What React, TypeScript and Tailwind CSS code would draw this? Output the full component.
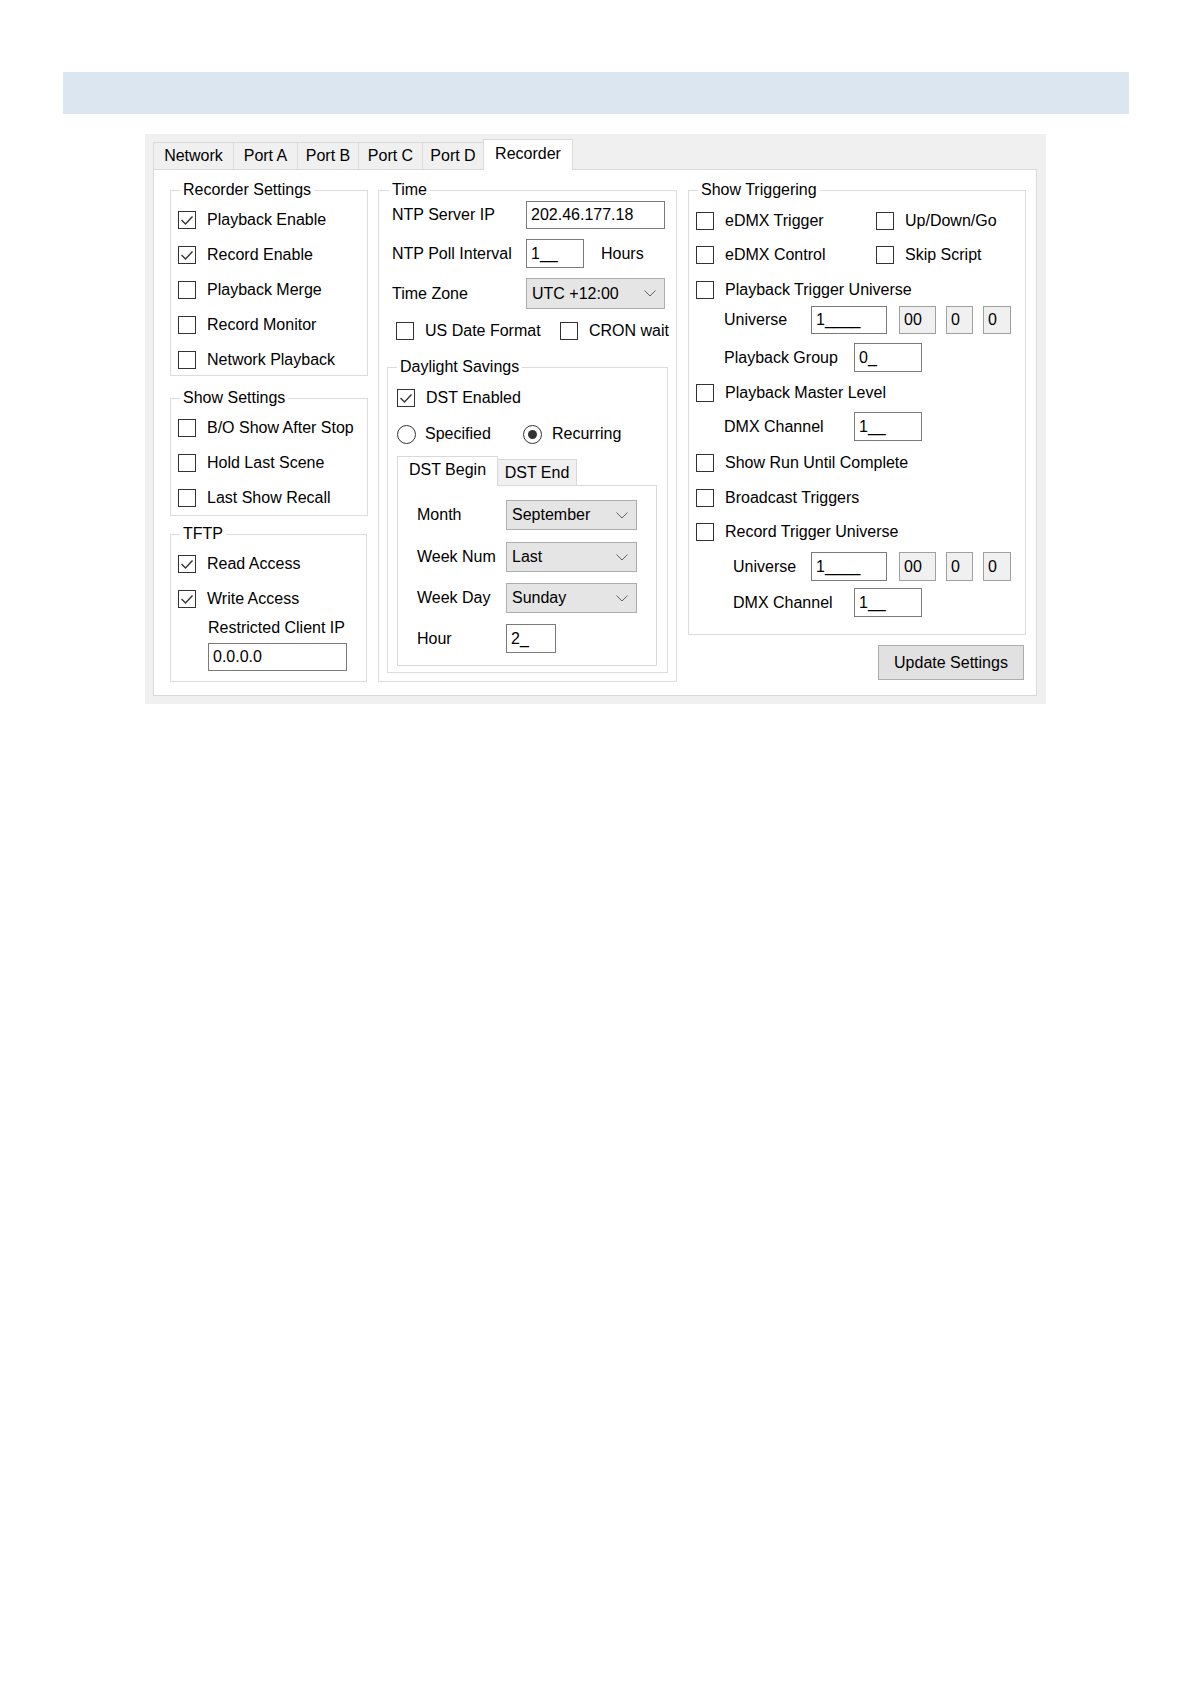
import React from "react";

function Check({ checked = false }: { checked?: boolean }) {
  return (
    <span className="w-[18px] h-[18px] shrink-0 border border-[#333333] bg-white flex items-center justify-center">
      {checked && (
        <svg width="16" height="16" viewBox="0 0 16 16">
          <polyline points="2.5,8 6.5,12 13.5,4.5" fill="none" stroke="#333333" strokeWidth="1.4" />
        </svg>
      )}
    </span>
  );
}

function Radio({ checked = false }: { checked?: boolean }) {
  return (
    <span className="w-[19px] h-[19px] shrink-0 rounded-full border border-[#333333] bg-white flex items-center justify-center">
      {checked && <span className="w-[9px] h-[9px] rounded-full bg-[#333333]" />}
    </span>
  );
}

function CheckRow({ label, checked, className = "" }: { label: string; checked?: boolean; className?: string }) {
  return (
    <div className={`flex items-center gap-[11px] h-[20px] ${className}`}>
      <Check checked={checked} />
      <span>{label}</span>
    </div>
  );
}

function Field({ value, className = "" }: { value: string; className?: string }) {
  return (
    <div className={`shrink-0 flex items-center border border-[#7a7a7a] bg-white pl-[4px] ${className}`}>
      {value}
    </div>
  );
}

function ReadOnly({ value, className = "" }: { value: string; className?: string }) {
  return (
    <div className={`shrink-0 flex items-center border border-[#a0a0a0] bg-[#f0f0f0] pl-[4px] ${className}`}>
      {value}
    </div>
  );
}

function Select({ value, className = "" }: { value: string; className?: string }) {
  return (
    <div className={`shrink-0 flex items-center justify-between border border-[#adadad] bg-[#e5e5e5] pl-[5px] pr-[8px] ${className}`}>
      <span>{value}</span>
      <svg width="12" height="7" viewBox="0 0 12 7">
        <polyline points="0.5,0.5 6,6 11.5,0.5" fill="none" stroke="#606060" strokeWidth="1" />
      </svg>
    </div>
  );
}

function Legend({ children, className = "ml-[2px]" }: { children: React.ReactNode; className?: string }) {
  return <legend className={`px-[3px] leading-[20px] ${className}`}>{children}</legend>;
}

export default function App() {
  const tabs = [
    { label: "Network", w: "w-[81px]" },
    { label: "Port A", w: "w-[65px]" },
    { label: "Port B", w: "w-[62px]" },
    { label: "Port C", w: "w-[65px]" },
    { label: "Port D", w: "w-[62px]" },
  ];

  return (
    <div className="min-h-screen bg-white pt-[72px] text-[16px] leading-[20px] text-black font-['Liberation_Sans',Arial,sans-serif]">
      <div className="ml-[63px] w-[1066px] h-[42px] bg-[#dce6f1]" />

      <div className="ml-[145px] mt-[20px] w-[901px] h-[570px] bg-[#f0f0f0] pt-[5px] pl-[8px]">
        {/* tab strip */}
        <div className="flex items-end h-[30px]">
          {tabs.map((t) => (
            <div
              key={t.label}
              className={`${t.w} h-[27px] -mr-px border border-b-0 border-[#d9d9d9] bg-[#f0f0f0] flex items-center justify-center`}
            >
              {t.label}
            </div>
          ))}
          <div className="relative z-10 w-[90px] h-[31px] -mb-px border border-b-0 border-[#d9d9d9] bg-white flex items-start justify-center pt-[4px]">
            Recorder
          </div>
        </div>

        {/* tab page */}
        <div className="w-[884px] h-[527px] border border-[#d9d9d9] bg-white pt-[10px] pl-[16px] flex gap-[10px]">
          {/* column 1 */}
          <div className="w-[198px] flex flex-col">
            <fieldset className="h-[196px] border border-[#dcdcdc] pl-[7px] pt-[10px] flex flex-col gap-[15px]">
              <Legend>Recorder Settings</Legend>
              <CheckRow label="Playback Enable" checked />
              <CheckRow label="Record Enable" checked />
              <CheckRow label="Playback Merge" />
              <CheckRow label="Record Monitor" />
              <CheckRow label="Network Playback" />
            </fieldset>
            <fieldset className="mt-[12px] h-[128px] border border-[#dcdcdc] pl-[7px] pt-[10px] flex flex-col gap-[15px]">
              <Legend>Show Settings</Legend>
              <CheckRow label="B/O Show After Stop" />
              <CheckRow label="Hold Last Scene" />
              <CheckRow label="Last Show Recall" />
            </fieldset>
            <fieldset className="mt-[8px] h-[158px] w-[197px] border border-[#dcdcdc] pl-[7px] pt-[10px] flex flex-col">
              <Legend>TFTP</Legend>
              <CheckRow label="Read Access" checked />
              <CheckRow label="Write Access" checked className="mt-[15px]" />
              <div className="mt-[9px] h-[20px] pl-[30px]">Restricted Client IP</div>
              <Field value="0.0.0.0" className="ml-[30px] mt-[5px] w-[139px] h-[28px]" />
            </fieldset>
          </div>

          {/* column 2 */}
          <fieldset className="w-[299px] h-[502px] border border-[#dcdcdc] pl-[8px] flex flex-col">
            <Legend>Time</Legend>
            <div className="mt-[1px] h-[28px] pl-[5px] flex items-center">
              <span className="w-[134px]">NTP Server IP</span>
              <Field value="202.46.177.18" className="w-[139px] h-[28px]" />
            </div>
            <div className="mt-[10px] h-[29px] pl-[5px] flex items-center">
              <span className="w-[134px]">NTP Poll Interval</span>
              <Field value="1__" className="w-[58px] h-[29px]" />
              <span className="ml-[17px]">Hours</span>
            </div>
            <div className="mt-[10px] h-[31px] pl-[5px] flex items-center">
              <span className="w-[134px]">Time Zone</span>
              <Select value="UTC +12:00" className="w-[139px] h-[31px]" />
            </div>
            <div className="mt-[13px] h-[18px] pl-[9px] flex items-center">
              <CheckRow label="US Date Format" className="w-[164px]" />
              <CheckRow label="CRON wait" />
            </div>

            <fieldset className="mt-[17px] w-[281px] h-[316px] border border-[#dcdcdc] pl-[9px] flex flex-col">
              <Legend className="ml-0">Daylight Savings</Legend>
              <CheckRow label="DST Enabled" checked className="mt-[11px]" />
              <div className="mt-[16px] h-[20px] flex items-center">
                <div className="w-[126px] flex items-center gap-[9px]">
                  <Radio />
                  <span>Specified</span>
                </div>
                <div className="flex items-center gap-[10px]">
                  <Radio checked />
                  <span>Recurring</span>
                </div>
              </div>

              {/* DST tab control */}
              <div className="mt-[12px] flex items-end h-[29px]">
                <div className="relative z-10 w-[101px] h-[30px] -mb-px border border-b-0 border-[#d9d9d9] bg-white flex items-start justify-center pt-[3px]">
                  DST Begin
                </div>
                <div className="w-[79px] h-[26px] border border-b-0 border-l-0 border-[#d9d9d9] bg-[#f0f0f0] flex items-center justify-center">
                  DST End
                </div>
              </div>
              <div className="w-[260px] h-[181px] border border-[#d9d9d9] bg-white pt-[14px] pl-[19px] flex flex-col">
                <div className="h-[30px] flex items-center">
                  <span className="w-[89px]">Month</span>
                  <Select value="September" className="w-[131px] h-[30px]" />
                </div>
                <div className="mt-[12px] h-[30px] flex items-center">
                  <span className="w-[89px]">Week Num</span>
                  <Select value="Last" className="w-[131px] h-[30px]" />
                </div>
                <div className="mt-[11px] h-[30px] flex items-center">
                  <span className="w-[89px]">Week Day</span>
                  <Select value="Sunday" className="w-[131px] h-[30px]" />
                </div>
                <div className="mt-[11px] h-[29px] flex items-center">
                  <span className="w-[89px]">Hour</span>
                  <Field value="2_" className="w-[50px] h-[29px]" />
                </div>
              </div>
            </fieldset>
          </fieldset>

          {/* column 3 */}
          <div className="w-[338px] ml-[1px] flex flex-col">
            <fieldset className="h-[455px] border border-[#dcdcdc] pl-[7px] flex flex-col">
              <Legend>Show Triggering</Legend>
              <div className="mt-[11px] h-[20px] flex items-center">
                <CheckRow label="eDMX Trigger" className="w-[180px] gap-[10px]" />
                <CheckRow label="Up/Down/Go" className="gap-[11px]" />
              </div>
              <div className="mt-[14px] h-[20px] flex items-center">
                <CheckRow label="eDMX Control" className="w-[180px] gap-[10px]" />
                <CheckRow label="Skip Script" className="gap-[11px]" />
              </div>
              <CheckRow label="Playback Trigger Universe" className="mt-[15px] gap-[10px]" />
              <div className="mt-[6px] h-[28px] pl-[28px] flex items-center">
                <span className="w-[87px]">Universe</span>
                <Field value="1____" className="w-[76px] h-[28px]" />
                <ReadOnly value="00" className="ml-[12px] w-[37px] h-[28px]" />
                <ReadOnly value="0" className="ml-[10px] w-[27px] h-[28px]" />
                <ReadOnly value="0" className="ml-[10px] w-[28px] h-[28px]" />
              </div>
              <div className="mt-[9px] h-[29px] pl-[28px] flex items-center">
                <span className="w-[130px]">Playback Group</span>
                <Field value="0_" className="w-[68px] h-[29px]" />
              </div>
              <CheckRow label="Playback Master Level" className="mt-[11px] gap-[10px]" />
              <div className="mt-[9px] h-[29px] pl-[28px] flex items-center">
                <span className="w-[130px]">DMX Channel</span>
                <Field value="1__" className="w-[68px] h-[29px]" />
              </div>
              <CheckRow label="Show Run Until Complete" className="mt-[12px] gap-[10px]" />
              <CheckRow label="Broadcast Triggers" className="mt-[15px] gap-[10px]" />
              <CheckRow label="Record Trigger Universe" className="mt-[14px] gap-[10px]" />
              <div className="mt-[10px] h-[29px] pl-[37px] flex items-center">
                <span className="w-[78px]">Universe</span>
                <Field value="1____" className="w-[76px] h-[29px]" />
                <ReadOnly value="00" className="ml-[12px] w-[37px] h-[29px]" />
                <ReadOnly value="0" className="ml-[10px] w-[27px] h-[29px]" />
                <ReadOnly value="0" className="ml-[10px] w-[28px] h-[29px]" />
              </div>
              <div className="mt-[7px] h-[29px] pl-[37px] flex items-center">
                <span className="w-[121px]">DMX Channel</span>
                <Field value="1__" className="w-[68px] h-[29px]" />
              </div>
            </fieldset>
            <button className="mt-[10px] mr-[2px] self-end w-[146px] h-[35px] border border-[#adadad] bg-[#e1e1e1] text-[16px] leading-[20px]">
              Update Settings
            </button>
          </div>
        </div>
      </div>
    </div>
  );
}
